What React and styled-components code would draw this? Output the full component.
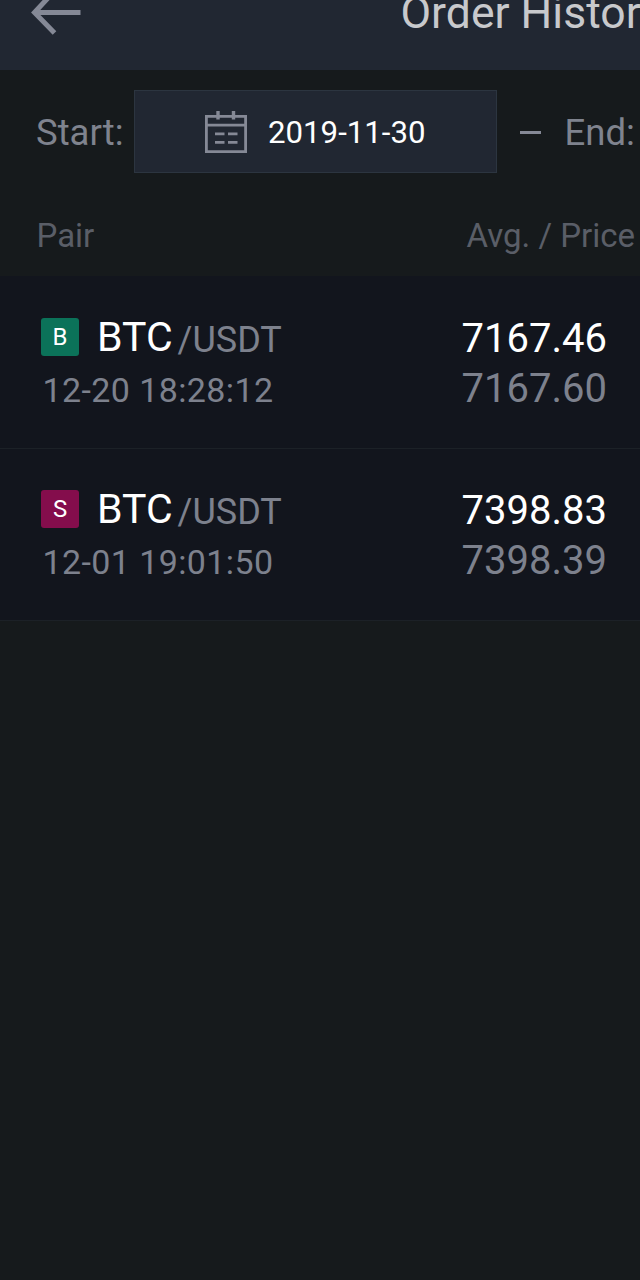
import styled, { createGlobalStyle } from 'styled-components';

const orders = [
  {
    id: 1,
    side: 'B',
    base: 'BTC',
    quote: 'USDT',
    time: '12-20 18:28:12',
    avg: '7167.46',
    price: '7167.60',
  },
  {
    id: 2,
    side: 'S',
    base: 'BTC',
    quote: 'USDT',
    time: '12-01 19:01:50',
    avg: '7398.83',
    price: '7398.39',
  },
];

export default function App() {
  return (
    <>
      <GlobalStyle />
      <Screen>
        <Header>
          <BackIcon />
          <Title>Order History</Title>
        </Header>
        <Filter>
          <Label>Start:</Label>
          <DateField>
            <CalendarIcon />
            <DateValue>2019-11-30</DateValue>
          </DateField>
          <Dash />
          <Label>End:</Label>
        </Filter>
        <Columns>
          <span>Pair</span>
          <span>Avg. / Price</span>
        </Columns>
        <OrderList>
          {orders.map(order => (
            <Order key={order.id} {...order} />
          ))}
        </OrderList>
      </Screen>
    </>
  );
}

function Order({ side, base, quote, time, avg, price }) {
  return (
    <OrderRow>
      <div>
        <Pair>
          <Side $side={side}>{side}</Side>
          <Base>{base}</Base>
          <Quote>/{quote}</Quote>
        </Pair>
        <Time>{time}</Time>
      </div>
      <Prices>
        <Price $bright>{avg}</Price>
        <Price>{price}</Price>
      </Prices>
    </OrderRow>
  );
}

function BackIcon() {
  return (
    <Arrow viewBox="0 0 50 50" fill="none" stroke="#858996" strokeWidth="5">
      <path d="M49.5 24.5H4M23.5 3L3.5 24.5l20 20.5" />
    </Arrow>
  );
}

function CalendarIcon() {
  return (
    <Calendar viewBox="0 0 42 42" fill="none" stroke="#858996">
      <path
        d="M1.4 5.4h39.2v35.2H1.4zM1.4 14.2h39.2M10 22.8h9.5M23 22.8h9.5M10 31.3h9.5M23 31.3h9.5"
        strokeWidth="2.8"
      />
      <path d="M13 0v8.5M28.5 0v8.5" strokeWidth="3.4" />
    </Calendar>
  );
}

const GlobalStyle = createGlobalStyle`
  * {
    box-sizing: border-box;
  }
  body {
    margin: 0;
    background: #161a1c;
    font-family: Roboto, 'Liberation Sans', sans-serif;
  }
`;

const Screen = styled.main`
  height: 1280px;
  overflow: hidden;
  background: #161a1c;
  white-space: nowrap;
`;

const Header = styled.header`
  display: flex;
  height: 70px;
  padding-left: 31px;
  overflow: hidden;
  background: #212732;
`;

const Arrow = styled.svg`
  flex: none;
  width: 50px;
  height: 50px;
  margin-top: -12.5px;
`;

const Title = styled.h1`
  margin: 0 0 0 319.5px;
  color: #c8c9cc;
  font-size: 44.5px;
  font-weight: 400;
  line-height: 26px;
`;

const Filter = styled.section`
  display: flex;
  align-items: center;
  height: 124px;
  padding-left: 36px;
`;

const Label = styled.span`
  color: #7f838e;
  font-size: 36.5px;
`;

const DateField = styled.div`
  display: flex;
  align-items: center;
  width: 363px;
  height: 83px;
  margin: -1px 0 0 10px;
  padding-left: 70px;
  border: 1px solid #2c3540;
  background: #212732;
`;

const Calendar = styled.svg`
  width: 42px;
  height: 42px;
`;

const DateValue = styled.span`
  margin: 2px 0 0 21.5px;
  color: #fff;
  font-size: 31.2px;
`;

const Dash = styled.span`
  width: 21px;
  height: 3px;
  margin: 0 24px 0 23px;
  background: #858996;
`;

const Columns = styled.div`
  display: flex;
  justify-content: space-between;
  height: 82px;
  padding: 0 5px 0 36.5px;
  color: #5a5e67;
  font-size: 33px;
  line-height: 83px;
`;

const OrderList = styled.ul`
  margin: 0;
  padding: 1px 0 0;
  background: #12151d;
  list-style: none;
`;

const OrderRow = styled.li`
  display: flex;
  justify-content: space-between;
  height: 172px;
  padding: 37px 33px 0 41px;
  border-bottom: 1px solid #1c2127;
`;

const Pair = styled.div`
  display: flex;
  align-items: center;
  height: 40px;
  margin-top: 3px;
`;

const Side = styled.span`
  width: 38px;
  height: 38px;
  border-radius: 3px;
  background: ${({ $side }) => ($side === 'B' ? '#0b7259' : '#840d4c')};
  color: #fff;
  font-size: 24px;
  line-height: 38px;
  text-align: center;
`;

const Base = styled.span`
  margin-left: 18px;
  color: #fff;
  font-size: 41px;
`;

const Quote = styled.span`
  margin: 5px 0 0 5px;
  color: #7d818d;
  font-size: 36px;
`;

const Time = styled.div`
  margin: 13px 0 0 1.5px;
  color: #7d818d;
  font-size: 34px;
  letter-spacing: 0.4px;
  line-height: 40px;
`;

const Prices = styled.div`
  text-align: right;
`;

const Price = styled.div`
  color: ${({ $bright }) => ($bright ? '#fff' : '#7d818d')};
  font-size: 40px;
  line-height: 50px;
`;
